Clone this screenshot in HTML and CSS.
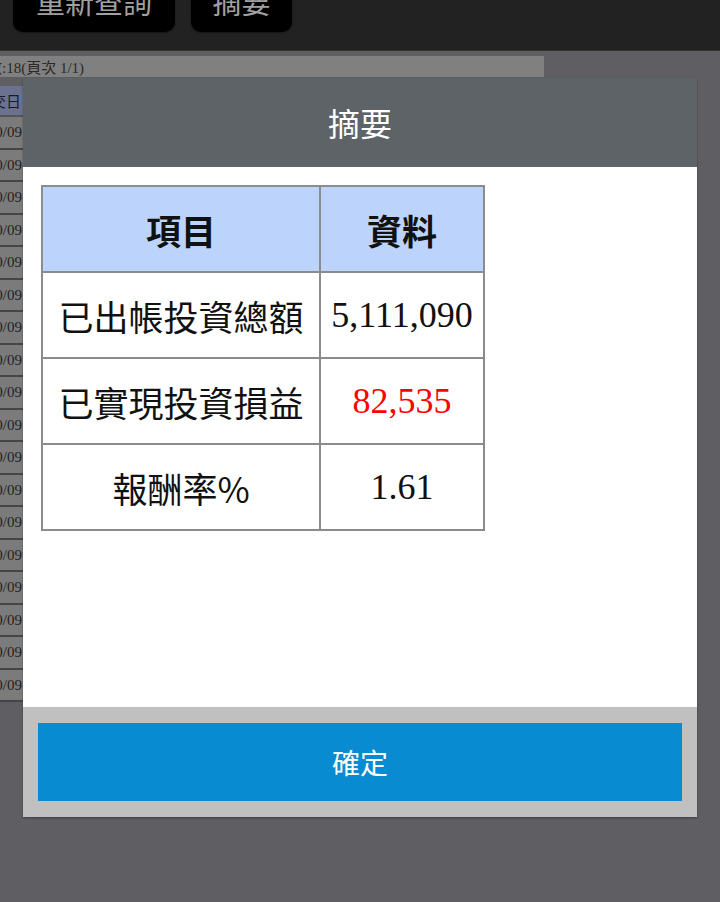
FILE: index.html
```html
<!doctype html>
<html lang="zh-Hant">
 <head>
  <meta charset="UTF-8">
  <meta name="viewport" content="width=device-width, initial-scale=1.0">
  <title>摘要</title>
  <link rel="stylesheet" href="styles.css">
 </head>
 <body>
  <div class="topbar">
    <button class="top-btn wide">重新查詢</button>
    <button class="top-btn">摘要</button>
  </div>

  <!-- 背景的查詢結果 -->
  <div class="page">
    <div class="caption">數:18(頁次 1/1)</div>
    <div class="list">
      <div class="list-head">交日</div>
      <div class="row">10/09</div>
      <div class="row">10/09</div>
      <div class="row">10/09</div>
      <div class="row">10/09</div>
      <div class="row">10/09</div>
      <div class="row">10/09</div>
      <div class="row">10/09</div>
      <div class="row">10/09</div>
      <div class="row">10/09</div>
      <div class="row">10/09</div>
      <div class="row">10/09</div>
      <div class="row">10/09</div>
      <div class="row">10/09</div>
      <div class="row">10/09</div>
      <div class="row">10/09</div>
      <div class="row">10/09</div>
      <div class="row">10/09</div>
      <div class="row">10/09</div>
    </div>
  </div>

  <!-- 摘要視窗 -->
  <div class="dialog">
    <div class="dialog-title">摘要</div>
    <div class="dialog-body">
      <table class="summary">
        <tr>
          <th class="col-item">項目</th>
          <th class="col-data">資料</th>
        </tr>
        <tr>
          <td>已出帳投資總額</td>
          <td class="num">5,111,090</td>
        </tr>
        <tr>
          <td>已實現投資損益</td>
          <td class="num red">82,535</td>
        </tr>
        <tr>
          <td>報酬率%</td>
          <td class="num">1.61</td>
        </tr>
      </table>
    </div>
    <div class="dialog-foot">
      <button class="ok-btn">確定</button>
    </div>
  </div>
 </body>
</html>
```

FILE: styles.css
```css
body {
    margin: 0;
    height: 902px;
    overflow: hidden;
    background: #5f5e63;
    font-family: "Noto Sans CJK TC", "Noto Sans", sans-serif;
}
.topbar {
    height: 51px;
    background: #222;
    border-bottom: 1px solid #333;
    overflow: hidden;
    display: flex;
    align-items: flex-end;
    gap: 16px;
    padding: 0 0 18px 13px;
    box-sizing: border-box;
}
.top-btn {
    height: 52px;
    width: 101px;
    background: #000;
    color: #a0a0a0;
    border: none;
    border-radius: 10px;
    font-family: "Noto Sans CJK TC", sans-serif;
    font-size: 29px;
    line-height: 34px;
    padding: 0 0 14px;
    display: flex;
    align-items: flex-end;
    justify-content: center;
    box-shadow: 0 1px 2px rgba(0, 0, 0, 0.4);
}
.top-btn.wide {
    width: 162px;
}
.page {
    padding-top: 5px;
    margin-left: -13px;
}
.caption {
    width: 557px;
    height: 21px;
    background: #808080;
    color: #2a2a2a;
    font-family: "Liberation Serif", "Noto Sans CJK TC", serif;
    font-size: 15px;
    line-height: 24px;
    overflow: hidden;
}
.list {
    margin-top: 9px;
    width: 36px;
}
.list-head {
    height: 29px;
    background: #6a7290;
    color: #1a1a2a;
    font-size: 15px;
    line-height: 29px;
    text-align: right;
    padding-right: 2px;
    border-bottom: 2px solid #555;
}
.row {
    height: 30.5px;
    background: #7b7b7b;
    border-bottom: 2px solid #454545;
    color: #222;
    font-family: "Liberation Serif", serif;
    font-size: 15px;
    line-height: 30px;
    text-align: right;
    padding-right: 1px;
}
.dialog {
    position: absolute;
    left: 23px;
    top: 78px;
    width: 674px;
    box-shadow: 0 1px 2px rgba(0, 0, 0, 0.35);
}
.dialog-title {
    height: 89px;
    background: #5e6367;
    color: #fff;
    font-size: 32px;
    line-height: 89px;
    text-align: center;
}
.dialog-body {
    height: 540px;
    background: #fff;
    padding: 18px;
    box-sizing: border-box;
}
.summary {
    border-collapse: collapse;
    width: 444px;
    border: 2px solid #777;
}
.summary th,
.summary td {
    border: 2px solid #8c8c8c;
    height: 84px;
    padding: 0;
    text-align: center;
    font-size: 35px;
    color: #111;
}
.summary th {
    background: #bcd4fb;
    font-weight: bold;
}
.col-item {
    width: 276px;
}
.summary .num {
    font-family: "Liberation Serif", serif;
    font-size: 36px;
}
.summary .red {
    color: #ff0000;
}
.dialog-foot {
    height: 110px;
    background: #c0c0c0;
    padding: 16px 15px;
    box-sizing: border-box;
}
.ok-btn {
    width: 100%;
    height: 78px;
    border: none;
    background: #088bd1;
    color: #fff;
    font-family: "Noto Sans CJK TC", sans-serif;
    font-size: 28px;
}
```
